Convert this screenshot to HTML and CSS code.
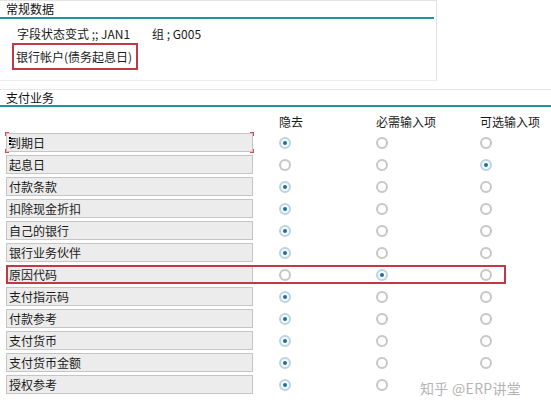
FILE: index.html
```html
<!DOCTYPE html>
<html lang="zh-CN">
<head>
<meta charset="utf-8">
<link rel="stylesheet" href="styles.css">
</head>
<body>
<div class="page">
  <section class="panel-general">
    <div class="section-title">常规数据</div>
    <div class="field-status"><span>字段状态变式 ;; JAN1</span><span class="group">组 ; G005</span></div>
    <div class="bank-box">银行帐户(债务起息日)</div>
  </section>

  <section class="panel-pay">
    <div class="section-title">支付业务</div>
    <div class="grid-head">
      <span></span><span>隐去</span><span>必需输入项</span><span>可选输入项</span>
    </div>
    <div class="rows">
      <div class="row focus"><div class="label"><i class="cursor"></i>到期日</div><span class="radio on"></span><span class="radio"></span><span class="radio"></span></div>
      <div class="row"><div class="label">起息日</div><span class="radio"></span><span class="radio"></span><span class="radio on"></span></div>
      <div class="row"><div class="label">付款条款</div><span class="radio on"></span><span class="radio"></span><span class="radio"></span></div>
      <div class="row"><div class="label">扣除现金折扣</div><span class="radio on"></span><span class="radio"></span><span class="radio"></span></div>
      <div class="row"><div class="label">自己的银行</div><span class="radio on"></span><span class="radio"></span><span class="radio"></span></div>
      <div class="row"><div class="label">银行业务伙伴</div><span class="radio on"></span><span class="radio"></span><span class="radio"></span></div>
      <div class="row marked"><div class="label">原因代码</div><span class="radio"></span><span class="radio on"></span><span class="radio"></span></div>
      <div class="row"><div class="label">支付指示码</div><span class="radio on"></span><span class="radio"></span><span class="radio"></span></div>
      <div class="row"><div class="label">付款参考</div><span class="radio on"></span><span class="radio"></span><span class="radio"></span></div>
      <div class="row"><div class="label">支付货币</div><span class="radio on"></span><span class="radio"></span><span class="radio"></span></div>
      <div class="row"><div class="label">支付货币金额</div><span class="radio on"></span><span class="radio"></span><span class="radio"></span></div>
      <div class="row"><div class="label">授权参考</div><span class="radio on"></span><span class="radio"></span><span class="radio"></span></div>
    </div>
  </section>
  <div class="watermark">知乎 @ERP讲堂</div>
</div>
</body>
</html>
```

FILE: styles.css
```css
html, body {
  margin: 0;
  padding: 0;
  background: #ffffff;
}
body {
  font-family: "Noto Sans CJK SC", "Noto Sans", "DejaVu Sans", sans-serif;
  font-size: 12px;
  color: #1a1a1a;
}
.page {
  position: relative;
  width: 551px;
  height: 409px;
  overflow: hidden;
}
.panel-general {
  width: 437px;
  height: 81px;
  box-sizing: border-box;
  border-top: 1px solid #e3e3e3;
  border-right: 1px solid #e3e3e3;
  border-bottom: 1px solid #ececec;
}
.section-title {
  height: 16px;
  line-height: 16px;
  padding-left: 6px;
  border-bottom: 2px solid #2a8ea8;
  font-size: 12px;
  color: #111;
}
.panel-general .section-title {
  margin-right: 2px;
}
.field-status {
  margin-top: 7px;
  padding-left: 17px;
  height: 15px;
  line-height: 15px;
  display: flex;
}
.field-status .group {
  margin-left: 22px;
}
.bank-box {
  margin-top: 2px;
  margin-left: 12px;
  width: 126px;
  height: 27px;
  box-sizing: border-box;
  border: 2px solid #c23845;
  padding-left: 2px;
  display: flex;
  align-items: center;
  white-space: nowrap;
}
.panel-pay {
  margin-top: 8px;
  border-top: 1px solid #e6e6e6;
}
.panel-pay .section-title {
  height: 15px;
  line-height: 15px;
}
.grid-head {
  margin-top: 7px;
  height: 15px;
  line-height: 15px;
  display: grid;
  grid-template-columns: 279px 97px 104px 1fr;
  color: #1a1a1a;
}
.rows {
  margin-top: 4px;
  display: flex;
  flex-direction: column;
  gap: 3px;
}
.row {
  position: relative;
  height: 19px;
  display: grid;
  grid-template-columns: 273px 97px 104px 1fr;
  align-items: center;
  padding-left: 6px;
}
.label {
  position: relative;
  width: 247px;
  height: 19px;
  box-sizing: border-box;
  border: 1px solid #c5c5c5;
  background: #ececec;
  padding-left: 2px;
  line-height: 17px;
  white-space: nowrap;
}
.cursor {
  position: absolute;
  left: 2px;
  top: 3px;
  width: 0;
  height: 8px;
  border-left: 2px dotted #000;
}
.radio {
  width: 12px;
  height: 12px;
  box-sizing: border-box;
  border: 2px solid #c6c6c6;
  border-radius: 50%;
  background: #fff;
  position: relative;
}
.radio.on {
  border-color: #bcd3e2;
  background: #f6fafc;
}
.radio.on::after {
  content: "";
  position: absolute;
  left: 2px;
  top: 2px;
  width: 4px;
  height: 4px;
  border-radius: 50%;
  background: #1d6f9e;
}
.row.focus::before {
  content: "";
  position: absolute;
  left: 5px;
  top: -1px;
  width: 249px;
  height: 21px;
  pointer-events: none;
  background:
    linear-gradient(#c8505a, #c8505a) left top / 4px 1px no-repeat,
    linear-gradient(#c8505a, #c8505a) left top / 1px 4px no-repeat,
    linear-gradient(#c8505a, #c8505a) right top / 4px 1px no-repeat,
    linear-gradient(#c8505a, #c8505a) right top / 1px 4px no-repeat,
    linear-gradient(#c8505a, #c8505a) left bottom / 4px 1px no-repeat,
    linear-gradient(#c8505a, #c8505a) left bottom / 1px 4px no-repeat,
    linear-gradient(#c8505a, #c8505a) right bottom / 4px 1px no-repeat,
    linear-gradient(#c8505a, #c8505a) right bottom / 1px 4px no-repeat;
}
.row.marked::after {
  content: "";
  position: absolute;
  left: 6px;
  top: 0;
  width: 500px;
  height: 19px;
  box-sizing: border-box;
  border: 2px solid #c23845;
  pointer-events: none;
}
.watermark {
  position: absolute;
  left: 418px;
  top: 377px;
  padding: 1px 2px;
  background: #ffffff;
  font-size: 14px;
  color: #b4b4b4;
  letter-spacing: 0.3px;
  white-space: nowrap;
}
```
